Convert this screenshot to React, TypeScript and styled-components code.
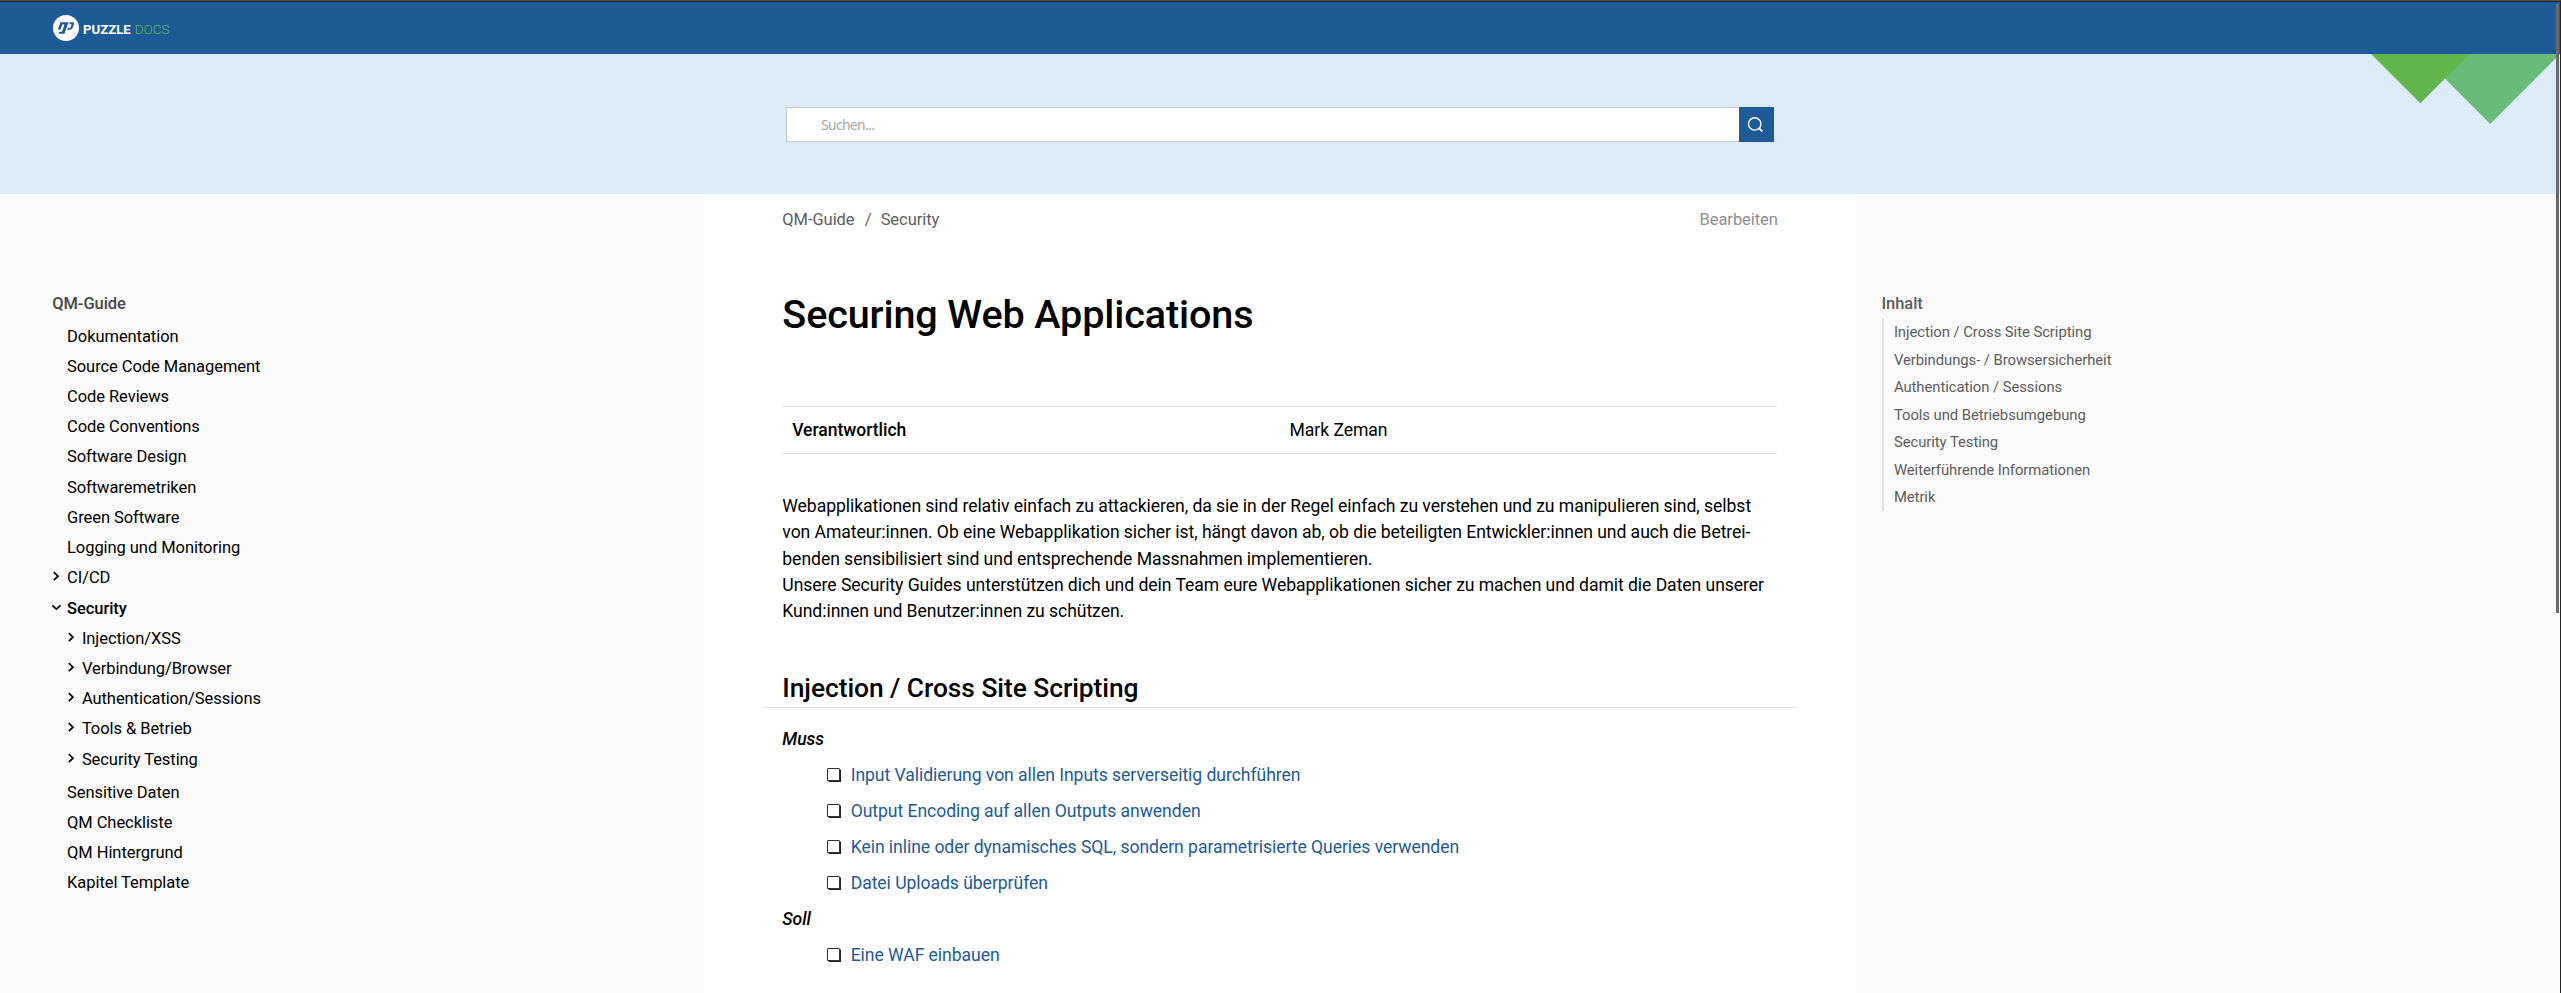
import React from 'react';
import styled, { createGlobalStyle } from 'styled-components';

const blue = '#1e5a96';

const GlobalStyle = createGlobalStyle`
  * { box-sizing: border-box; }
  html, body { margin: 0; padding: 0; }
  body {
    background: #fafafa;
    color: #000;
    font-family: Roboto, sans-serif;
    font-size: 17.6px;
    letter-spacing: -0.063px;
    overflow: hidden;
  }
  a { color: inherit; text-decoration: none; }
  h1, h2, h3, p, ul { margin: 0; padding: 0; font-weight: inherit; }
  ul { list-style: none; }
`;

const Window = styled.div`
  position: relative;
  height: 993px;
  overflow: hidden;
  border-top: 1px solid #4d4d4d;
  border-right: 1px solid #262626;
`;

const Header = styled.header`
  height: 53px;
  border-top: 1px solid #262626;
  background: ${blue};
  display: flex;
  align-items: center;
  padding-left: 53px;
`;

const Brand = styled.a`
  display: flex;
  align-items: center;
  height: 26px;
  font-size: 13.2px;
  line-height: 16px;
  letter-spacing: 0;
  color: #fff;
`;

const BrandName = styled.span`
  margin: 3px 0 0 4px;
  font-weight: 700;
`;

const BrandSuffix = styled.span`
  margin: 2px 0 0 4px;
  font-weight: 300;
  font-size: 13.5px;
  color: #62b54a;
`;

const SearchBand = styled.div`
  position: relative;
  height: 140px;
  background: #dcebf8;
  padding: 53px 0 0 786px;
`;

const SearchForm = styled.div`
  display: flex;
  width: 988px;
  height: 35px;
`;

const SearchInput = styled.input`
  flex: 1;
  border: 1px solid #c8c8c8;
  border-right: 0;
  background: #fff;
  padding: 0 34px 1px;
  font: 13.8px 'Noto Sans', sans-serif;
  letter-spacing: -0.6px;
  outline: none;
  &::placeholder { color: #a6a6a6; opacity: 1; }
`;

const SearchButton = styled.button`
  width: 35px;
  border: 0;
  padding: 0 2px 1px 0;
  background: ${blue};
  display: flex;
  align-items: center;
  justify-content: center;
`;

const Triangles = styled.svg`
  position: absolute;
  top: 0;
  right: 0;
`;

const Columns = styled.div`
  display: grid;
  grid-template-columns: 704px 1152px 1fr;
  height: 799px;
`;

const Nav = styled.nav`
  padding: 99px 0 0 52.2px;
  font-size: 16.5px;
  line-height: 22px;
`;

const NavTitle = styled.h3`
  font-size: 16.5px;
  font-weight: 500;
  color: #474747;
  margin-bottom: 2.4px;
`;

const NavList = styled.ul<{ $nested?: boolean }>`
  padding-left: ${p => (p.$nested ? '14.85px' : '0')};
  padding-bottom: ${p => (p.$nested ? '2.8px' : '0')};
`;

const NavRow = styled.div<{ $active?: boolean }>`
  display: flex;
  padding-top: 8.22px;
  font-weight: ${p => (p.$active ? 500 : 400)};
`;

const Toggle = styled.span`
  width: 14.85px;
  height: 22px;
  flex: none;
  svg { display: block; margin-top: 3px; }
`;

const Main = styled.main`
  background: #fff;
  padding: 0 79px 0 78.3px;
`;

const Toolbar = styled.div`
  display: flex;
  height: 50px;
  align-items: center;
  justify-content: space-between;
  font-size: 16.5px;
  color: #5d5d5d;
`;

const Crumbs = styled.div`
  display: flex;
`;

const Slash = styled.span`
  margin: 0 9.2px 0 10.2px;
`;

const Edit = styled.a`
  color: #8e8e8e;
  margin-right: -0.8px;
`;

const Title = styled.h1`
  margin-top: 45px;
  font-size: 39.6px;
  line-height: 51.5px;
  font-weight: 500;
  letter-spacing: -0.13px;
`;

const InfoTable = styled.div`
  display: grid;
  grid-template-columns: 1fr 1fr;
  margin-top: 65.5px;
  height: 48px;
  border: solid #e1e1e1;
  border-width: 1px 0;
  line-height: 46px;
`;

const Cell = styled.div<{ $strong?: boolean }>`
  padding-left: 9.9px;
  font-weight: ${p => (p.$strong ? 500 : 400)};
`;

const Text = styled.p`
  margin-top: 38.7px;
  line-height: 26.4px;
  white-space: nowrap;
`;

const SectionTitle = styled.h2`
  margin: 44px -20px 0 -19.3px;
  padding: 0 19.3px;
  height: 39px;
  border-bottom: 1px solid #dfe1e1;
  font-size: 26.4px;
  line-height: 38.6px;
  font-weight: 500;
`;

const Checklist = styled.div`
  padding-top: 12.8px;
  line-height: 36px;
`;

const Level = styled.div`
  font-style: italic;
  font-weight: 500;
`;

const CheckItem = styled.div`
  display: flex;
  align-items: center;
  height: 36px;
  padding-left: 44.7px;
  a { color: ${blue}; margin-left: 9.7px; }
`;

const Toc = styled.aside`
  padding: 99px 0 0 25.5px;
  color: #5d5d5d;
`;

const TocTitle = styled.h3`
  font-size: 16.5px;
  line-height: 22px;
  font-weight: 500;
  margin-bottom: 3px;
`;

const TocList = styled.ul`
  border-left: 2px solid #e1e1e1;
  margin-left: 0.5px;
  padding: 1.1px 0 0 9.9px;
  height: 193px;
  font-size: 14.85px;
  line-height: 27.5px;
  letter-spacing: -0.06px;
`;

const ScrollThumb = styled.div`
  position: absolute;
  top: 3px;
  right: 1px;
  width: 3px;
  height: 609px;
  background: #6a6a6a;
`;

const Logo = () => (
  <svg width="26" height="26" viewBox="0 0 26 26">
    <circle cx="13" cy="13" r="13" fill="#fff" />
    <path d="M7.4 7.2H15.9L14.5 10L11.4 18.8H5.6L6.3 16.8H9L11.5 9.6H9.2L7.6 14.4H4.8Z" fill={blue} />
    <path d="M17 7.2H20.2Q21.6 7.4 21 9.2L19.8 12.6Q19 14.8 16.8 14.8H14.2L14.9 12.9H16.4Q17.4 12.8 17.7 11.9L18.6 9.3H16.3Z" fill={blue} />
  </svg>
);

const Chevron = ({ open }: { open?: boolean }) => (
  <svg width="11" height="13" viewBox="0 0 11 13" fill="none" stroke="#000" strokeWidth="1.7">
    {open ? <path d="M0.3 4.3L4.4 8.2L8.5 4.3" /> : <path d="M1.8 2.2L6 6.2L1.8 10.2" />}
  </svg>
);

const Box = () => (
  <svg width="14" height="14" viewBox="0 0 14 14">
    <path d="M1 1.5H14V14H1.5V13H0.5V1Z" fill="#222" />
    <rect x="0.5" y="0.5" width="12" height="12" rx="0.4" fill="#fff" stroke="#333" />
  </svg>
);

type Item = { label: string; state?: 'closed' | 'open'; children?: Item[] };

const navItems: Item[] = [
  { label: 'Dokumentation' },
  { label: 'Source Code Management' },
  { label: 'Code Reviews' },
  { label: 'Code Conventions' },
  { label: 'Software Design' },
  { label: 'Softwaremetriken' },
  { label: 'Green Software' },
  { label: 'Logging und Monitoring' },
  { label: 'CI/CD', state: 'closed' },
  {
    label: 'Security',
    state: 'open',
    children: [
      { label: 'Injection/XSS', state: 'closed' },
      { label: 'Verbindung/Browser', state: 'closed' },
      { label: 'Authentication/Sessions', state: 'closed' },
      { label: 'Tools & Betrieb', state: 'closed' },
      { label: 'Security Testing', state: 'closed' },
    ],
  },
  { label: 'Sensitive Daten' },
  { label: 'QM Checkliste' },
  { label: 'QM Hintergrund' },
  { label: 'Kapitel Template' },
];

const tocItems = [
  'Injection / Cross Site Scripting',
  'Verbindungs- / Browsersicherheit',
  'Authentication / Sessions',
  'Tools und Betriebsumgebung',
  'Security Testing',
  'Weiterführende Informationen',
  'Metrik',
];

const checks = [
  {
    level: 'Muss',
    items: [
      'Input Validierung von allen Inputs serverseitig durchführen',
      'Output Encoding auf allen Outputs anwenden',
      'Kein inline oder dynamisches SQL, sondern parametrisierte Queries verwenden',
      'Datei Uploads überprüfen',
    ],
  },
  { level: 'Soll', items: ['Eine WAF einbauen'] },
];

const NavTree = ({ items, nested }: { items: Item[]; nested?: boolean }) => (
  <NavList $nested={nested}>
    {items.map(item => (
      <li key={item.label}>
        <NavRow $active={item.state === 'open'}>
          <Toggle>{item.state && <Chevron open={item.state === 'open'} />}</Toggle>
          <a href="#">{item.label}</a>
        </NavRow>
        {item.children && <NavTree items={item.children} nested />}
      </li>
    ))}
  </NavList>
);

export default function App() {
  return (
    <>
      <GlobalStyle />
      <Window>
        <Header>
          <Brand href="#">
            <Logo />
            <BrandName>PUZZLE</BrandName>
            <BrandSuffix>DOCS</BrandSuffix>
          </Brand>
        </Header>
        <SearchBand>
          <SearchForm>
            <SearchInput placeholder="Suchen..." />
            <SearchButton aria-label="Suchen">
              <svg width="17" height="17" viewBox="0 0 17 17" fill="none" stroke="#fff" strokeWidth="1.4">
                <circle cx="7.7" cy="7.9" r="6.2" />
                <path d="M12.2 12.3L15.4 15.4" strokeWidth="1.8" />
              </svg>
            </SearchButton>
          </SearchForm>
          <Triangles width="189" height="71" viewBox="0 0 189 71">
            <path d="M49.3 0H189L119.3 70Z" fill="#69bb79" />
            <path d="M0 0H98.6L49.3 49.3Z" fill="#61b54b" />
          </Triangles>
        </SearchBand>
        <Columns>
          <Nav>
            <NavTitle>QM-Guide</NavTitle>
            <NavTree items={navItems} />
          </Nav>
          <Main>
            <Toolbar>
              <Crumbs>
                <a href="#">QM-Guide</a>
                <Slash>/</Slash>
                <a href="#">Security</a>
              </Crumbs>
              <Edit href="#">Bearbeiten</Edit>
            </Toolbar>
            <Title>Securing Web Applications</Title>
            <InfoTable>
              <Cell $strong>Verantwortlich</Cell>
              <Cell>Mark Zeman</Cell>
            </InfoTable>
            <Text>
              Webapplikationen sind relativ einfach zu attackieren, da sie in der Regel einfach zu verstehen und zu manipulieren sind, selbst
              <br />
              von Amateur:innen. Ob eine Webapplikation sicher ist, hängt davon ab, ob die beteiligten Entwickler:innen und auch die Betrei-
              <br />
              benden sensibilisiert sind und entsprechende Massnahmen implementieren.
              <br />
              Unsere Security Guides unterstützen dich und dein Team eure Webapplikationen sicher zu machen und damit die Daten unserer
              <br />
              Kund:innen und Benutzer:innen zu schützen.
            </Text>
            <SectionTitle>Injection / Cross Site Scripting</SectionTitle>
            <Checklist>
              {checks.map(group => (
                <div key={group.level}>
                  <Level>{group.level}</Level>
                  {group.items.map(label => (
                    <CheckItem key={label}>
                      <Box />
                      <a href="#">{label}</a>
                    </CheckItem>
                  ))}
                </div>
              ))}
            </Checklist>
          </Main>
          <Toc>
            <TocTitle>Inhalt</TocTitle>
            <TocList>
              {tocItems.map(label => (
                <li key={label}><a href="#">{label}</a></li>
              ))}
            </TocList>
          </Toc>
        </Columns>
        <ScrollThumb />
      </Window>
    </>
  );
}
